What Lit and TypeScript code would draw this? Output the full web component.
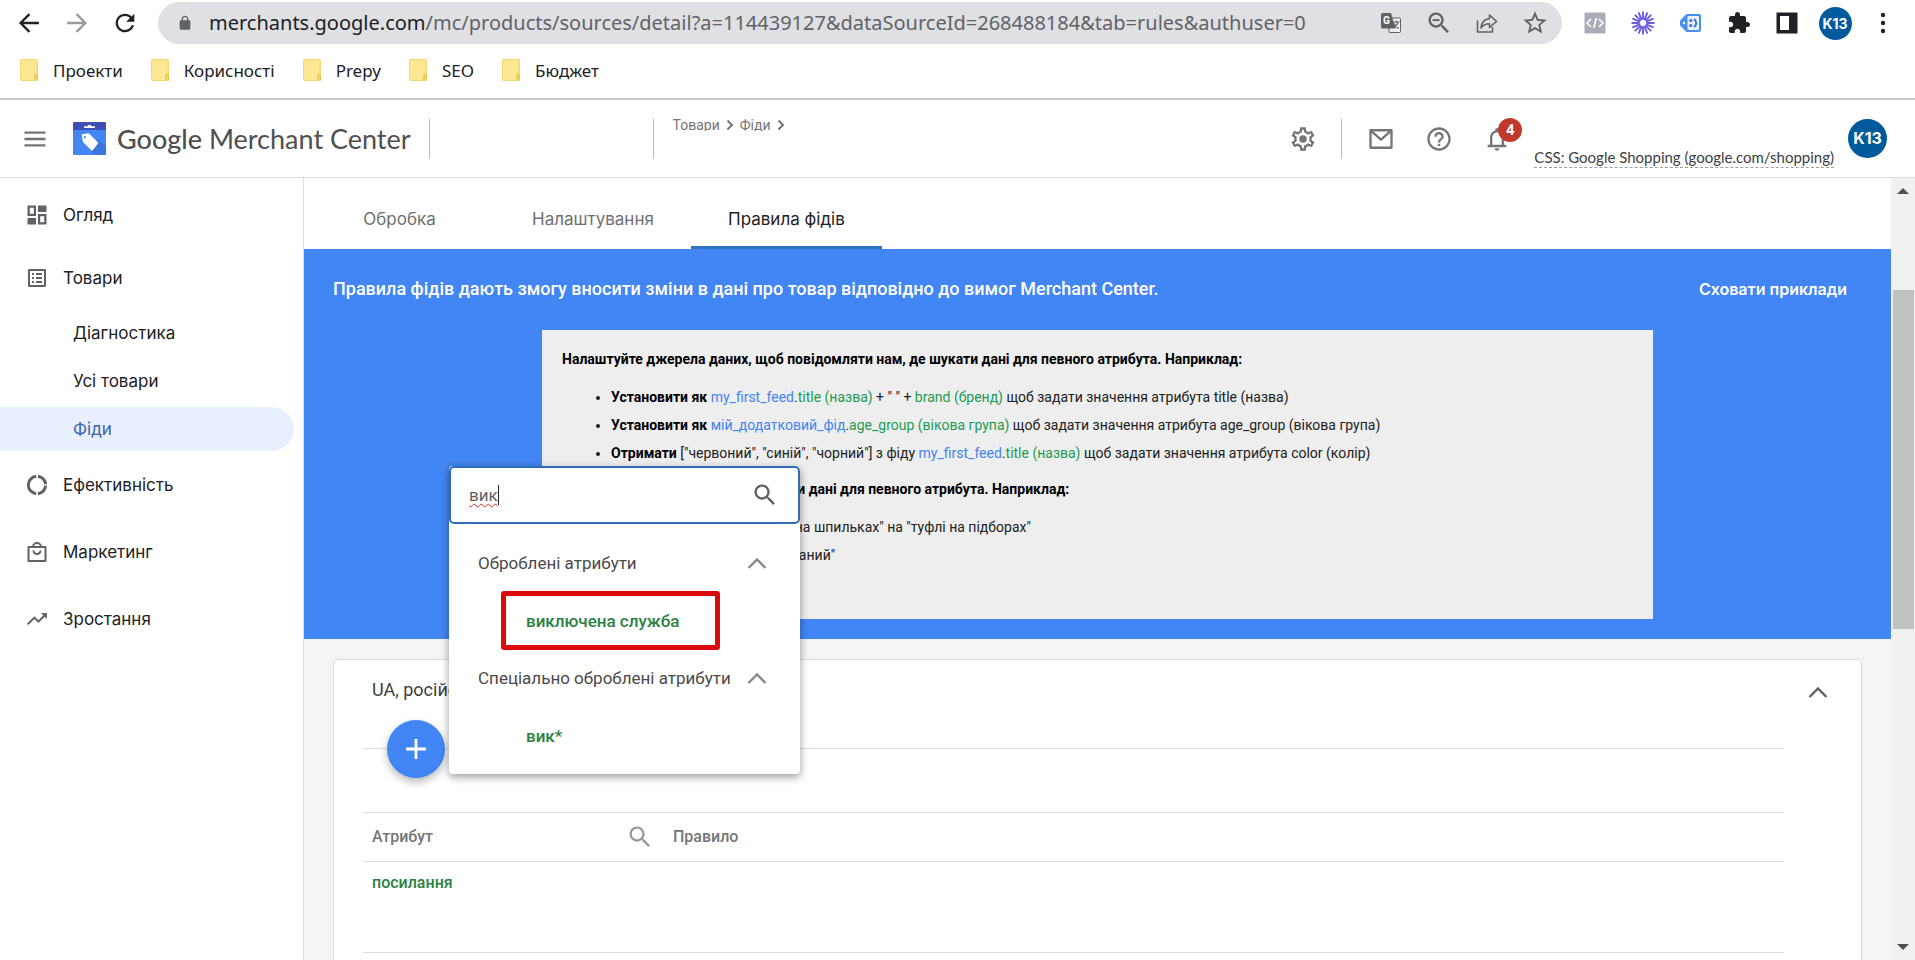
import { LitElement, html, css, svg, nothing } from "lit";
import { customElement, state } from "lit/decorators.js";

const SEARCH =
  "M15.5 14h-.79l-.28-.27C15.41 12.59 16 11.11 16 9.5 16 5.91 13.09 3 9.5 3S3 5.91 3 9.5 5.91 16 9.5 16c1.61 0 3.09-.59 4.23-1.57l.27.28v.79l5 4.99L20.49 19l-4.99-5zm-6 0C7.01 14 5 11.99 5 9.5S7.01 5 9.5 5 14 7.01 14 9.5 11.99 14 9.5 14z";

const rays = Array.from({ length: 16 }, (_, i) => i * 22.5);

const icons = {
  back: svg`<path d="M20.500 11H7.200l5.900-5.900L11.700 3.700 3.400 12l8.300 8.300 1.400-1.400L7.200 13h13.300z"/>`,
  forward: svg`<path d="M3.500 11h13.300l-5.900-5.900 1.400-1.400 8.300 8.300-8.300 8.300-1.400-1.400 5.900-5.900H3.500z"/>`,
  reload: svg`<path d="M17.650 6.350C16.200 4.900 14.210 4 12 4c-4.420 0-7.990 3.580-7.990 8s3.570 8 7.990 8c3.730 0 6.840-2.550 7.730-6h-2.080c-.820 2.330-3.040 4-5.650 4-3.310 0-6-2.690-6-6s2.690-6 6-6c1.660 0 3.140.690 4.220 1.780L13 11h7V4l-2.350 2.350z"/>`,
  lock: svg`<path d="M18 8h-1V6c0-2.760-2.240-5-5-5S7 3.240 7 6v2H6c-1.100 0-2 .900-2 2v10c0 1.100.900 2 2 2h12c1.100 0 2-.900 2-2V10c0-1.100-.900-2-2-2zM9 6c0-1.660 1.340-3 3-3s3 1.340 3 3v2H9V6z"/>`,
  translate: svg`<rect x="10" y="7" width="11.500" height="14.500" rx="1" fill="#eee" stroke="#5f6368" stroke-width="1"/><path d="M3.500 2h8.500l4.500 15.500h-13A1.500 1.500 0 0 1 2 16V3.500A1.500 1.500 0 0 1 3.500 2z"/><text x="4" y="13" font-size="10" font-weight="700" font-family="Roboto" fill="#fff">G</text><path d="M14 11h6.500M17.200 9.500V11M19 11c-.5 2.500-2.500 5-4.500 6M15.200 12.500c.8 2 2.600 4 4.600 5" fill="none" stroke="#5f6368" stroke-width="1.200"/>`,
  zoomOut: svg`<path d="${SEARCH}"/><path d="M6.500 8.700h6v1.600h-6z"/>`,
  share: svg`<path d="M2.500 9.500v11.500h15v-5M6 17c.5-6 4-9 8.500-9.300V4l7 6.300-7 6.200v-3.800c-4 0-6.500 1.300-8.500 4.300z" fill="none" stroke="currentColor" stroke-width="1.600" stroke-linejoin="round"/>`,
  star: svg`<path d="M22 9.240l-7.190-.620L12 2 9.190 8.630 2 9.240l5.460 4.730L5.820 21 12 17.270 18.180 21l-1.630-7.030L22 9.240zM12 15.400l-3.760 2.270 1-4.280-3.320-2.880 4.380-.380L12 6.100l1.710 4.040 4.380.380-3.320 2.880 1 4.280L12 15.400z"/>`,
  code: svg`<rect x="1.500" y="1.500" width="21" height="21" rx="1" fill="#a9adb8"/><path d="M8 8l-4 4 4 4M16 8l4 4-4 4M13.300 7l-2.600 10" fill="none" stroke="#fff" stroke-width="1.600"/>`,
  burst: svg`<g stroke="#6a5be6" stroke-width="1.900" stroke-linecap="round">${rays.map(
    (a) => svg`<path d="M12 1.200V8" transform="rotate(${a} 12 12)"/>`,
  )}</g>`,
  tag: svg`<path d="M7.500 3H20a2 2 0 0 1 2 2v14a2 2 0 0 1-2 2H7.500L1 14.500v-5z" fill="#4a90f0"/><rect x="8.500" y="5" width="11.500" height="14" rx="1" fill="#e8f1ff"/><path d="M15 8c3 2 3 6 0 8" fill="none" stroke="#2f78e0" stroke-width="2"/><circle cx="11.800" cy="9.500" r="1.600" fill="#2f78e0"/><circle cx="11.800" cy="14.500" r="1.600" fill="#2f78e0"/><circle cx="5" cy="12" r="1.200" fill="#fff"/>`,
  puzzle: svg`<path d="M20.500 11H19V7c0-1.100-.900-2-2-2h-4V3.500C13 2.120 11.880 1 10.500 1S8 2.120 8 3.500V5H4c-1.100 0-1.990.900-1.990 2v3.800H3.500c1.490 0 2.700 1.210 2.700 2.700s-1.210 2.700-2.700 2.700H2V20c0 1.100.900 2 2 2h3.800v-1.500c0-1.490 1.210-2.700 2.700-2.700 1.490 0 2.700 1.210 2.700 2.700V22H17c1.100 0 2-.900 2-2v-4h1.500c1.380 0 2.500-1.120 2.500-2.500S21.880 11 20.500 11z"/>`,
  panel: svg`<path d="M1.500 1.500h21v21h-21zM5 5v14h9V5z" fill-rule="evenodd"/>`,
  dots: svg`<circle cx="12" cy="4" r="2.200"/><circle cx="12" cy="12" r="2.200"/><circle cx="12" cy="20" r="2.200"/>`,
  menu: svg`<path d="M3 5.500h18v2H3zM3 11h18v2H3zM3 16.500h18v2H3z"/>`,
  settings: svg`<path fill-rule="evenodd" d="M19.430 12.980c.04-.32.07-.64.07-.98 0-.34-.03-.66-.07-.98l2.110-1.650c.19-.15.24-.42.12-.64l-2-3.460c-.09-.16-.26-.25-.44-.25-.06 0-.12.01-.17.03l-2.490 1c-.52-.4-1.080-.73-1.690-.98l-.38-2.650C14.460 2.180 14.250 2 14 2h-4c-.25 0-.46.18-.49.42l-.38 2.650c-.61.25-1.170.59-1.690.98l-2.490-1c-.06-.02-.12-.03-.18-.03-.17 0-.34.09-.43.25l-2 3.460c-.13.22-.07.49.12.64l2.110 1.650c-.04.32-.07.65-.07.98 0 .33.03.66.07.98l-2.110 1.650c-.19.15-.24.42-.12.64l2 3.460c.09.16.26.25.44.25.06 0 .12-.01.17-.03l2.490-1c.52.4 1.080.73 1.690.98l.38 2.650c.03.24.24.42.49.42h4c.25 0 .46-.18.49-.42l.38-2.650c.61-.25 1.170-.59 1.690-.98l2.490 1c.06.02.12.03.18.03.17 0 .34-.09.43-.25l2-3.460c.12-.22.07-.49-.12-.64l-2.110-1.650zm-1.980-1.710c.04.31.05.52.05.73 0 .21-.02.43-.05.73l-.14 1.130.89.7 1.080.84-.7 1.210-1.270-.51-1.040-.42-.9.68c-.43.32-.84.56-1.250.73l-1.060.43-.16 1.130-.2 1.350h-1.400l-.19-1.350-.16-1.130-1.060-.43c-.43-.18-.83-.41-1.230-.71l-.91-.7-1.060.43-1.270.51-.7-1.210 1.080-.84.89-.7-.14-1.130c-.03-.31-.05-.54-.05-.74s.02-.43.05-.73l.14-1.130-.89-.7-1.080-.84.7-1.210 1.270.51 1.040.42.9-.68c.43-.32.84-.56 1.250-.73l1.060-.43.16-1.130.2-1.350h1.390l.19 1.350.16 1.130 1.060.43c.43.18.83.41 1.230.71l.91.7 1.060-.43 1.270-.51.7 1.210-1.070.85-.89.7.14 1.130z"/><circle cx="12" cy="12" r="3.200"/>`,
  mail: svg`<path d="M3 4.500h18v15H3zM3.500 5l8.500 7.500L20.500 5" fill="none" stroke="currentColor" stroke-width="2" stroke-linejoin="round"/>`,
  help: svg`<path d="M11 18h2v-2h-2v2zm1-16C6.480 2 2 6.480 2 12s4.480 10 10 10 10-4.480 10-10S17.520 2 12 2zm0 18c-4.410 0-8-3.590-8-8s3.590-8 8-8 8 3.590 8 8-3.590 8-8 8zm0-14c-2.210 0-4 1.790-4 4h2c0-1.100.900-2 2-2s2 .900 2 2c0 2-3 1.750-3 5h2c0-2.250 3-2.500 3-5 0-2.210-1.790-4-4-4z"/>`,
  bell: svg`<path d="M12 22c1.100 0 2-.900 2-2h-4c0 1.100.900 2 2 2zm6-5v-6c0-3.070-1.630-5.640-4.500-6.320V4c0-.830-.670-1.500-1.500-1.500s-1.500.670-1.500 1.500v.680C7.640 5.360 6 7.920 6 11v6H4v2h16v-2h-2zm-2 0H8v-6c0-2.480 1.510-4.500 4-4.500s4 2.020 4 4.500v6z"/>`,
  dashboard: svg`<path fill-rule="evenodd" d="M2.500 2.500h8.500v10.500H2.500zM4.800 4.800v6h4v-6zM13 2.500h8.500V9H13zM13 11h8.500v10.500H13zM15.200 13.200v6h4v-6zM2.500 15H11v6.500H2.500z"/>`,
  list: svg`<path d="M19 5v14H5V5h14m1.100-2H3.900c-.5 0-.9.4-.9.9v16.200c0 .4.4.9.9.9h16.200c.4 0 .9-.5.9-.9V3.900c0-.5-.5-.9-.9-.9zM11 7h6v2h-6V7zm0 4h6v2h-6v-2zm0 4h6v2h-6zM7 7h2v2H7zm0 4h2v2H7zm0 4h2v2H7z"/>`,
  donut: svg`<circle cx="12" cy="12" r="8.700" pathLength="360" fill="none" stroke="currentColor" stroke-width="3" stroke-dasharray="0 5 79 12 168 12 79 5"/>`,
  bag: svg`<path d="M3.500 7h17v14h-17zM8 7a4 4 0 0 1 8 0M8.500 10.500a3.500 3.500 0 0 0 7 0" fill="none" stroke="currentColor" stroke-width="2" stroke-linejoin="round"/>`,
  trend: svg`<path d="M16 6l2.290 2.290-4.880 4.880-4-4L2 16.590 3.410 18l6-6 4 4 6.300-6.290L22 12V6z"/>`,
  search: svg`<path d="${SEARCH}"/>`,
  up: svg`<path d="M3.500 17L12 8.500l8.500 8.500" fill="none" stroke="currentColor" stroke-width="2.400"/>`,
  next: svg`<path d="M7 3l9 9-9 9" fill="none" stroke="currentColor" stroke-width="4"/>`,
  plus: svg`<path d="M10.800 3.500h2.400v7.300h7.300v2.400h-7.300v7.300h-2.400v-7.300H3.500v-2.400h7.300z"/>`,
  folder: svg`<path d="M2 0h14a2 2 0 0 1 2 2v20H2a2 2 0 0 1-2-2V2a2 2 0 0 1 2-2z" fill="#f6d96e"/><path d="M2 1h13a1.500 1.500 0 0 1 1.500 1.500V14c-1.500 0-2.500 1-2.500 2.500V21H1V2a1 1 0 0 1 1-1z" fill="#fde793"/><path d="M15 21v-4.500a1.200 1.200 0 0 1 2.400 0V21" fill="none" stroke="#e3c04e"/>`,
  logo: svg`<rect width="33" height="33" rx="1.500" fill="#4285f4"/><path d="M25 17l8 8v6.500a1.500 1.500 0 0 1-1.500 1.500H22l-4-4z" fill="#3a74dc"/><path d="M1.500 0h30A1.500 1.500 0 0 1 33 1.500V8H0V1.500A1.500 1.500 0 0 1 1.500 0z" fill="#3c4fb5"/><path d="M11 4.200h3.400a2.200 2.200 0 0 1 4.200 0H22V6H11z" fill="#fff"/><path d="M9.500 13l6-1 9 9-5.500 7-8.500-8.500z" fill="#fff" stroke="#fff" stroke-width="1.500" stroke-linejoin="round"/><circle cx="11.800" cy="15.200" r="1.100" fill="#4285f4"/>`,
};

type IconName = keyof typeof icons;

const icon = (name: IconName, cls = "i24", box = "0 0 24 24") =>
  html`<svg class="icon ${cls}" viewBox=${box} aria-hidden="true">${icons[name]}</svg>`;

const shared = css`
  :host { display: block; box-sizing: border-box; }
  *, *::before, *::after { box-sizing: border-box; }
  button { border: 0; background: none; padding: 0; margin: 0; font: inherit; color: inherit; }
  a { color: inherit; text-decoration: none; }
  h1, h2, h3, p, ul { margin: 0; padding: 0; font: inherit; }
  .icon { display: block; flex: none; fill: currentColor; }
  .i16 { width: 16px; height: 20px; }
  .i24 { width: 24px; height: 24px; }
  .i28 { width: 28px; height: 28px; }
`;

@customElement("browser-bar")
class BrowserBar extends LitElement {
  static styles = [
    shared,
    css`
      :host { font-family: "Noto Sans", "Open Sans", sans-serif; color: #202124; background: #fff; border-bottom: 2px solid #c9c9c9; }
      .row { display: flex; align-items: center; padding: 2px 8px 0 5px; }
      .btn { flex: none; width: 48px; height: 42px; display: grid; place-items: center; }
      .faded { color: #9b9b9d; }
      .grey { color: #5f6368; }
      .omni { flex: 1; min-width: 0; display: flex; align-items: center; height: 42px; margin: 0 9px; padding: 0 3px 0 19px; border-radius: 21px; background: #dfe0e3; }
      .url { flex: 1; min-width: 0; margin-left: 16px; border: 0; padding: 0; background: none; font-size: 20px; line-height: 28px; color: #5f6368; overflow: hidden; white-space: nowrap; }
      .host { color: #202124; }
      .avatar { width: 33px; height: 33px; border-radius: 50%; background: #015a9c; color: #fff; display: grid; place-items: center; font: 700 14px/33px Inter, sans-serif; }
      .marks { display: flex; gap: 28px; padding: 0 20px 2px; height: 54px; align-items: center; font-size: 17px; }
      .mark { display: flex; align-items: center; gap: 15px; }
      .folder { width: 18px; height: 22px; }
    `,
  ];

  private tools: [IconName, string, string][] = [
    ["translate", "Перекласти", "i24"],
    ["zoomOut", "Масштаб", "i28"],
    ["share", "Поділитися", "i24"],
    ["star", "Закладка", "i28"],
  ];
  private extensions: IconName[] = ["code", "burst", "tag", "puzzle", "panel"];
  private marks = ["Проекти", "Корисності", "Prepy", "SEO", "Бюджет"];

  render() {
    return html`
      <div class="row">
        <button class="btn" aria-label="Назад">${icon("back", "i28")}</button>
        <button class="btn faded" aria-label="Вперед">${icon("forward", "i28")}</button>
        <button class="btn" aria-label="Оновити">${icon("reload", "i28")}</button>
        <div class="omni">
          <span class="grey">${icon("lock", "i16")}</span>
          <div class="url"><span class="host">merchants.google.com</span>/mc/products/sources/detail?a=114439127&amp;dataSourceId=268488184&amp;tab=rules&amp;authuser=0</div>
          ${this.tools.map(([name, label, size]) => html`<button class="btn grey" aria-label=${label}>${icon(name, size)}</button>`)}
        </div>
        ${this.extensions.map((t) => html`<button class="btn" aria-label=${t}>${icon(t)}</button>`)}
        <button class="btn" aria-label="Профіль"><span class="avatar">K13</span></button>
        <button class="btn" aria-label="Меню">${icon("dots")}</button>
      </div>
      <nav class="marks">
        ${this.marks.map(
          (m) => html`<a class="mark" href="#">${icon("folder", "folder", "0 0 18 22")}<span>${m}</span></a>`,
        )}
      </nav>
    `;
  }
}

@customElement("mc-header")
class McHeader extends LitElement {
  static styles = [
    shared,
    css`
      :host { display: flex; align-items: center; height: 78px; padding: 0 28px 0 21px; background: #fff; border-bottom: 1px solid #dadce0; color: #757575; font-family: Roboto, sans-serif; }
      .brand { display: flex; align-items: center; gap: 11px; margin: 0 18px 0 24px; color: #505050; font: 27px/36px Lato, sans-serif; white-space: nowrap; }
      .strong { font-weight: 500; }
      .logo { width: 33px; height: 33px; }
      .rule { flex: none; width: 1px; height: 40px; background: #bdbdbd; }
      .account { width: 223px; }
      .crumbs { display: flex; align-items: center; align-self: flex-start; gap: 6px; height: 13px; overflow: hidden; margin: 18px 0 0 19px; font-size: 14px; line-height: 16px; }
      .chev { width: 8px; height: 12px; }
      .actions { display: flex; align-items: center; margin-left: auto; }
      .btn { position: relative; width: 58px; height: 48px; display: grid; place-items: center; }
      .actions .rule { margin: 0 10px 0 9px; }
      .badge { position: absolute; left: 30px; top: 3px; width: 24px; height: 24px; border-radius: 50%; background: #c0392b; color: #fff; font: 700 15px/24px Roboto, sans-serif; text-align: center; }
      .css { align-self: flex-end; margin: 0 14px 9px 8px; border-bottom: 1px dashed #9e9e9e; color: #3c4043; font: 15px/20px Lato, sans-serif; white-space: nowrap; }
      .avatar { width: 39px; height: 39px; border-radius: 50%; background: #015a9c; color: #fff; font: 700 16px/39px Inter, sans-serif; text-align: center; }
    `,
  ];

  render() {
    return html`
      <button aria-label="Головне меню">${icon("menu", "i28")}</button>
      <a class="brand" href="#">${icon("logo", "logo", "0 0 33 33")}<span><span class="strong">Google</span> Merchant Center</span></a>
      <span class="rule"></span><span class="account"></span><span class="rule"></span>
      <nav class="crumbs">
        <a href="#">Товари</a>${icon("next", "chev", "4 0 16 24")}<a href="#">Фіди</a>${icon("next", "chev", "4 0 16 24")}
      </nav>
      <div class="actions">
        <button class="btn" aria-label="Налаштування">${icon("settings", "i28")}</button>
        <span class="rule"></span>
        <button class="btn" aria-label="Пошта">${icon("mail", "i28")}</button>
        <button class="btn" aria-label="Довідка">${icon("help", "i28")}</button>
        <button class="btn" aria-label="Сповіщення">${icon("bell", "i28")}<span class="badge">4</span></button>
      </div>
      <a class="css" href="#">CSS: Google Shopping (google.com/shopping)</a>
      <button class="avatar">K13</button>
    `;
  }
}

interface NavItem { label: string; icon: IconName; children?: string[]; }

@customElement("mc-sidebar")
class McSidebar extends LitElement {
  static styles = [
    shared,
    css`
      :host { width: 304px; flex: none; background: #fff; border-right: 1px solid #dadce0; padding: 15px 9px 0 0; font: 17px/20px Inter, sans-serif; color: #202124; }
      .list { display: flex; flex-direction: column; gap: 23px; list-style: none; }
      .item { display: flex; align-items: center; gap: 14px; height: 44px; padding-left: 25px; }
      .item .icon { color: #5f6368; }
      .open { margin: -4px 0 -11px; }
      .subs { display: flex; flex-direction: column; gap: 4px; list-style: none; padding: 11px 0 0; }
      .sub { display: flex; align-items: center; height: 44px; padding-left: 73px; border-radius: 0 22px 22px 0; }
      .on { background: #e8f0fe; color: #3c64b1; }
    `,
  ];

  @state() private current = "Фіди";

  private items: NavItem[] = [
    { label: "Огляд", icon: "dashboard" },
    { label: "Товари", icon: "list", children: ["Діагностика", "Усі товари", "Фіди"] },
    { label: "Ефективність", icon: "donut" },
    { label: "Маркетинг", icon: "bag" },
    { label: "Зростання", icon: "trend" },
  ];

  render() {
    return html`<nav>
      <ul class="list">
        ${this.items.map(
          (n) => html`<li class=${n.children ? "open" : ""}>
            <a class="item" href="#">${icon(n.icon)}<span>${n.label}</span></a>
            ${n.children
              ? html`<ul class="subs">
                  ${n.children.map(
                    (c) => html`<li><a class="sub ${c === this.current ? "on" : ""}" href="#" @click=${() => (this.current = c)}>${c}</a></li>`,
                  )}
                </ul>`
              : nothing}
          </li>`,
        )}
      </ul>
    </nav>`;
  }
}

@customElement("mc-banner")
class McBanner extends LitElement {
  static styles = [
    shared,
    css`
      :host { background: #4285f4; padding: 28px 0 20px; color: #fff; font-family: Roboto, sans-serif; }
      .top { display: flex; justify-content: space-between; align-items: center; padding: 0 44px 0 29px; font-size: 18px; line-height: 24px; font-weight: 500; }
      .hide { font: 600 16px/24px Inter, sans-serif; }
      .box { margin: 29px 15% 0; padding: 19px 20px 38px; background: #eee; color: #212121; font-size: 14px; }
      .title { font-weight: 700; line-height: 20px; color: #000; padding-bottom: 14px; }
      .rules { padding: 0 0 12px 49px; line-height: 28px; }
      .rules strong { color: #000; }
      .src { color: #4285f4; }
      .attr { color: #1e9b52; }
    `,
  ];

  render() {
    const src = (t: string) => html`<span class="src">${t}</span>`;
    const attr = (t: string) => html`<span class="attr">${t}</span>`;
    return html`
      <div class="top">
        <h1>Правила фідів дають змогу вносити зміни в дані про товар відповідно до вимог Merchant Center.</h1>
        <button class="hide">Сховати приклади</button>
      </div>
      <div class="box">
        <h2 class="title">Налаштуйте джерела даних, щоб повідомляти нам, де шукати дані для певного атрибута. Наприклад:</h2>
        <ul class="rules">
          <li><strong>Установити як</strong> ${src("my_first_feed")}.${attr("title (назва)")} + " " + ${attr("brand (бренд)")} щоб задати значення атрибута title (назва)</li>
          <li><strong>Установити як</strong> ${src("мій_додатковий_фід")}.${attr("age_group (вікова група)")} щоб задати значення атрибута age_group (вікова група)</li>
          <li><strong>Отримати</strong> ["червоний", "синій", "чорний"] з фіду ${src("my_first_feed")}.${attr("title (назва)")} щоб задати значення атрибута color (колір)</li>
        </ul>
        <h2 class="title">Додайте правила, щоб оптимізувати дані для певного атрибута. Наприклад:</h2>
        <ul class="rules">
          <li><strong>Знайти або замінити</strong> "туфлі на шпильках" на "туфлі на підборах"</li>
          <li><strong>Замінити</strong> "готовий" на "вживаний"</li>
        </ul>
      </div>
    `;
  }
}

@customElement("attribute-picker")
class AttributePicker extends LitElement {
  static styles = [
    shared,
    css`
      :host { width: 351px; background: #fff; border-radius: 4px; box-shadow: 0 3px 8px rgba(0, 0, 0, 0.4); font: 17px/20px Roboto, sans-serif; color: #4a4a4a; padding-bottom: 9px; }
      .field { display: flex; align-items: center; height: 58px; padding: 0 19px 0 18px; border: 2px solid #2f6db8; border-radius: 5px; background: #fff; }
      .input { field-sizing: content; min-width: 0; height: 28px; border: 0; padding: 0; outline: 0; background: none; font: inherit; line-height: 28px; color: #616161; text-decoration: underline wavy #d93025 1px; text-underline-offset: 2px; }
      .caret { width: 1px; height: 20px; background: #212121; }
      .field .icon { margin-left: auto; color: #616161; }
      .group { display: flex; align-items: center; justify-content: space-between; width: 100%; height: 56px; padding: 0 31px 0 29px; }
      .group .icon { color: #8a8a8a; }
      .first { margin-top: 11px; }
      .item { display: flex; align-items: center; height: 59px; margin-left: 52px; padding: 0 36px 0 20px; border: 5px solid transparent; border-radius: 3px; color: #2a8243; font-weight: 500; }
      .marked { border-color: #dc0a0d; }
    `,
  ];

  render() {
    return html`
      <label class="field">
        <input class="input" type="text" aria-label="Пошук атрибута" value="вик" spellcheck="false" />
        <span class="caret"></span>${icon("search", "i28")}
      </label>
      <button class="group first">Оброблені атрибути${icon("up")}</button>
      <button class="item marked">виключена служба</button>
      <button class="group">Спеціально оброблені атрибути${icon("up")}</button>
      <button class="item">вик*</button>
    `;
  }
}

@customElement("mc-feed")
class McFeed extends LitElement {
  static styles = [
    shared,
    css`
      :host { background: #f4f4f4; padding: 20px 29px 0; font: 16px/20px Roboto, sans-serif; color: #757575; }
      .card { background: #fff; border: 1px solid #dadce0; border-radius: 5px; padding: 18px 29px 100px; }
      .head { display: flex; justify-content: space-between; align-items: flex-end; height: 26px; padding: 0 2px 0 9px; font-size: 18px; color: #3c4043; }
      .head h2 { align-self: flex-start; line-height: 24px; }
      .head button { color: #5f6368; }
      .body { margin-right: 48px; }
      .adder { position: relative; display: flex; align-items: center; height: 58px; margin-top: 16px; padding-left: 24px; }
      .adder::before { content: ""; position: absolute; inset: 28px 0 auto 0; height: 1px; background: #dcdcdc; }
      .fab { position: relative; width: 58px; height: 58px; border-radius: 50%; background: #4285f4; color: #fff; display: grid; place-items: center; box-shadow: 0 4px 9px rgba(0, 0, 0, 0.28); }
      .picker { position: absolute; z-index: 2; left: 86px; bottom: 4px; }
      .table { width: 100%; margin-top: 34px; border-collapse: collapse; table-layout: fixed; text-align: left; }
      .table th, .table td { padding: 0 10px 0 9px; border-top: 1px solid #dcdcdc; border-bottom: 1px solid #dcdcdc; }
      .table th { height: 49px; font-weight: 500; }
      .table td { height: 91px; padding-top: 11px; vertical-align: top; }
      .attribute { width: 301px; }
      .cell { display: flex; align-items: center; justify-content: space-between; }
      .cell button { color: #9a9a9a; }
      .link { color: #2a8243; font-weight: 500; }
    `,
  ];

  render() {
    return html`
      <section class="card">
        <div class="head"><h2>UA, російська</h2><button aria-label="Згорнути">${icon("up")}</button></div>
        <div class="body">
          <div class="adder">
            <button class="fab" aria-label="Додати">${icon("plus", "i28")}</button>
            <attribute-picker class="picker"></attribute-picker>
          </div>
          <table class="table">
            <thead>
              <tr>
                <th class="attribute"><div class="cell">Атрибут<button aria-label="Пошук">${icon("search", "i28")}</button></div></th>
                <th>Правило</th>
              </tr>
            </thead>
            <tbody>
              <tr><td><a class="link" href="#">посилання</a></td><td></td></tr>
            </tbody>
          </table>
        </div>
      </section>
    `;
  }
}

@customElement("app-root")
class AppRoot extends LitElement {
  static styles = [
    shared,
    css`
      :host { display: flex; flex-direction: column; height: 100vh; overflow: hidden; background: #fff; }
      .work { flex: 1; min-height: 0; display: flex; }
      .main { flex: 1; min-width: 0; overflow: hidden; }
      .tabs { display: flex; height: 71px; background: #fff; font: 17px/20px Inter, sans-serif; color: #6f6f6f; }
      .tab { min-width: 191px; padding: 14px 37px 0; border-bottom: 3px solid transparent; }
      .active { color: #212121; border-color: #3074bd; }
      .scroll { flex: none; width: 24px; display: flex; flex-direction: column; align-items: center; background: #f0f0f0; }
      .arrow { width: 24px; height: 26px; display: grid; place-items: center; color: #505050; }
      .tri { width: 12px; height: 6px; }
      .track { flex: 1; width: 21px; display: flex; flex-direction: column; }
      .before { flex: 86; }
      .thumb { flex: 339; background: #c1c1c1; }
      .after { flex: 305; }
    `,
  ];

  @state() private tab = 2;

  render() {
    const tabs = ["Обробка", "Налаштування", "Правила фідів"];
    return html`
      <browser-bar></browser-bar>
      <mc-header></mc-header>
      <div class="work">
        <mc-sidebar></mc-sidebar>
        <main class="main">
          <div class="tabs" role="tablist">
            ${tabs.map(
              (t, i) => html`<button class="tab ${i === this.tab ? "active" : ""}" role="tab" aria-selected=${i === this.tab} @click=${() => (this.tab = i)}>${t}</button>`,
            )}
          </div>
          <mc-banner></mc-banner>
          <mc-feed></mc-feed>
        </main>
        <div class="scroll">
          <button class="arrow" aria-label="Угору"><svg class="tri" viewBox="0 0 12 6"><path d="M0 6l6-6 6 6z" fill="currentColor" /></svg></button>
          <div class="track"><div class="before"></div><div class="thumb"></div><div class="after"></div></div>
          <button class="arrow" aria-label="Униз"><svg class="tri" viewBox="0 0 12 6"><path d="M0 0l6 6 6-6z" fill="currentColor" /></svg></button>
        </div>
      </div>
    `;
  }
}
